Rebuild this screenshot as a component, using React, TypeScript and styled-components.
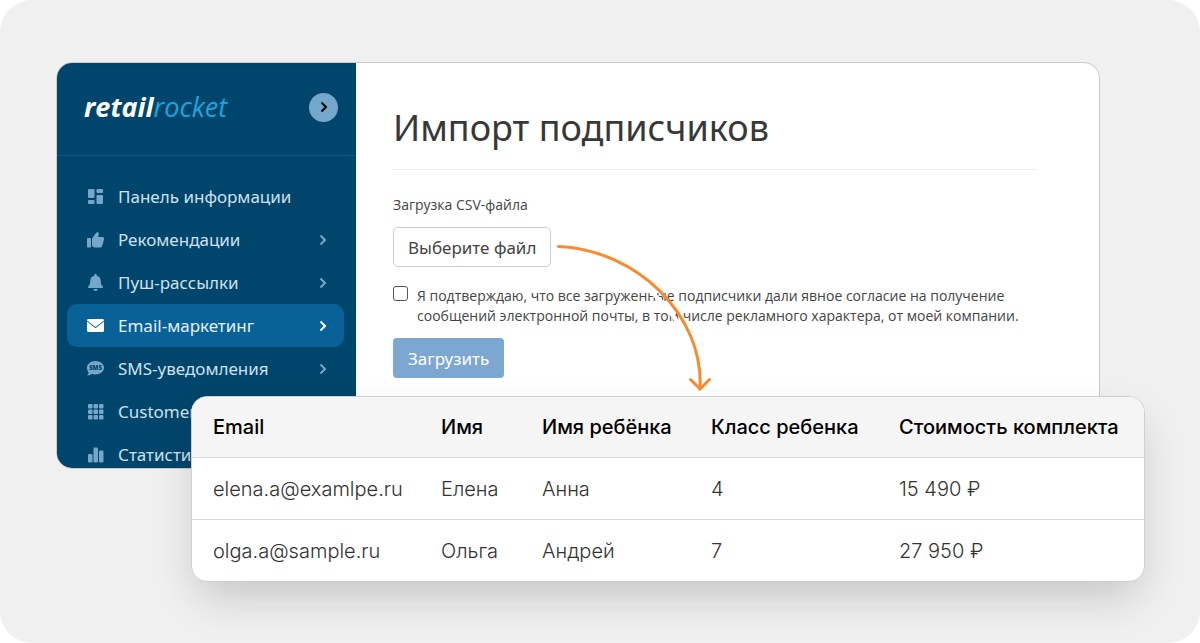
import { ReactNode } from "react"
import styled, { createGlobalStyle, css } from "styled-components"

const GlobalStyle = createGlobalStyle`
  * {
    box-sizing: border-box;
  }

  body {
    margin: 0;
    background: #ffffff;
    font-family: "Noto Sans", "Open Sans", sans-serif;
  }
`

const Stage = styled.div`
  min-height: 100vh;
  padding: 62px 55px 61px 56px;
  background: #f0f0f0;
  border-radius: 32px;
`

const Window = styled.div`
  display: flex;
  margin-right: 45px;
  overflow: hidden;
  background: #ffffff;
  border: 1px solid #cccccc;
  border-radius: 16px;
`

const Sidebar = styled.aside`
  flex: 0 0 299px;
  background: #00456b;
`

const SidebarHeader = styled.div`
  display: flex;
  align-items: center;
  justify-content: space-between;
  height: 93px;
  padding: 0 18px 4px 27px;
  border-bottom: 1px solid #075b8f;
`

const Logo = styled.a`
  color: #ffffff;
  font-family: "Open Sans", sans-serif;
  font-size: 27px;
  font-style: italic;
  font-weight: 700;
  line-height: 32px;
  text-decoration: none;

  span {
    color: #1ba5de;
    font-weight: 400;
  }
`

const CollapseButton = styled.button`
  display: flex;
  align-items: center;
  justify-content: center;
  width: 29px;
  height: 29px;
  padding: 0;
  color: #000000;
  background: #74a7cb;
  border: 0;
  border-radius: 50%;
`

/* the last item runs past the bottom edge of the window */
const Nav = styled.nav`
  display: flex;
  flex-direction: column;
  margin-bottom: -8px;
  padding: 19px 12px 0 10px;
`

const NavItem = styled.a<{ $active?: boolean }>`
  display: flex;
  align-items: center;
  gap: 13px;
  height: 43px;
  padding: 0 16px 0 19px;
  color: #cfe0ec;
  border-radius: 10px;
  font-size: 17px;
  line-height: 24px;
  text-decoration: none;
  white-space: nowrap;

  svg {
    flex: none;
    color: #74a7cb;
  }

  ${({ $active }) =>
    $active &&
    css`
      color: #e4f0f8;
      background: #086297;

      svg {
        color: #ffffff;
      }
    `}
`

const NavLabel = styled.span`
  flex: 1;
`

const Main = styled.main`
  flex: 1;
  padding: 41px 62px 0 37px;
  color: #444444;
`

const Title = styled.h1`
  margin: 0;
  padding-bottom: 17px;
  color: #383838;
  border-bottom: 1px solid #eeeeee;
  font-size: 36px;
  font-weight: 400;
  line-height: 48px;
`

const FieldLabel = styled.p`
  margin: 25px 0 12px;
  font-family: "Open Sans", sans-serif;
  font-size: 14px;
  line-height: 20px;
`

const FileField = styled.div`
  position: relative;
  width: fit-content;
`

const FileButton = styled.button`
  display: block;
  height: 40px;
  padding: 0 14px;
  color: #444444;
  background: #ffffff;
  border: 1px solid #cccccc;
  border-radius: 5px;
  font-family: inherit;
  font-size: 17px;
`

const Arrow = styled.svg`
  position: absolute;
  top: 0;
  left: 100%;
  pointer-events: none;
`

const Consent = styled.label`
  display: flex;
  align-items: flex-start;
  gap: 9px;
  margin: 19px 0 12px;
  font-family: "Open Sans", sans-serif;
  font-size: 14px;
  line-height: 20px;
`

const Checkbox = styled.input`
  flex: none;
  appearance: none;
  width: 15px;
  height: 15px;
  margin: 0;
  background: #ffffff;
  border: 1px solid #555555;
  border-radius: 3px;
`

const SubmitButton = styled.button`
  height: 40px;
  padding: 0 15px;
  color: #ffffff;
  background: #7ba7d1;
  border: 0;
  border-radius: 4px;
  font-family: inherit;
  font-size: 17px;
`

const TableCard = styled.div`
  position: relative;
  margin: -73px 0 0 135px;
  overflow: hidden;
  background: #ffffff;
  border: 1px solid #d0d0d0;
  border-radius: 16px;
  box-shadow: 0 20px 44px -8px rgba(30, 30, 30, 0.22);
`

const Table = styled.table`
  width: 100%;
  border-collapse: separate;
  border-spacing: 0;
  font-family: Inter, sans-serif;
  font-size: 20px;
  line-height: 24px;
  text-align: left;
  white-space: nowrap;

  th,
  td {
    padding: 18px 0 18px 21px;
  }

  th {
    color: #000000;
    background: #f5f5f5;
    font-weight: 500;
  }

  td {
    padding-top: 19px;
    color: #333333;
    border-top: 1px solid #d9d9d9;
    font-weight: 300;
  }
`

const Column = styled.col<{ $width?: number }>`
  width: ${({ $width }) => ($width ? `${$width}px` : "auto")};
`

const Icon = ({ children }: { children: ReactNode }) => (
  <svg width="19" height="18" viewBox="0 0 19 18" fill="currentColor">
    {children}
  </svg>
)

const Chevron = () => (
  <svg width="10" height="12" viewBox="0 0 10 12" fill="none">
    <path d="M2.500 1.500 7 6l-4.500 4.500" stroke="currentColor" strokeWidth="2" />
  </svg>
)

const DashboardIcon = () => (
  <Icon>
    <rect x="2" y="1" width="6.500" height="9" rx="1.200" />
    <rect x="10.500" y="1" width="6.500" height="4" rx="1.200" />
    <rect x="2" y="12" width="6.500" height="4" rx="1.200" />
    <rect x="10.500" y="7" width="6.500" height="9" rx="1.200" />
  </Icon>
)

const ThumbIcon = () => (
  <Icon>
    <rect x="1" y="7" width="4" height="9.500" rx="0.800" />
    <path d="M6 7.600 10 2c.4-.7 1-1 1.700-.8.9.2 1.300 1 1.100 1.900L12.200 6h4.300c1.200 0 1.900.9 1.600 2l-1.800 6.700c-.3 1.100-1.100 1.800-2.300 1.800H9c-.8 0-1.500-.3-2-.7l-1-.8Z" />
  </Icon>
)

const BellIcon = () => (
  <Icon>
    <path d="M9.500 0c.8 0 1.300.5 1.300 1.300v.5c2.500.6 4 2.600 4 5.200 0 3 .7 4.300 2 5.500.6.600.2 1.500-.6 1.500H2.800c-.8 0-1.200-.9-.6-1.500 1.300-1.200 2-2.500 2-5.500 0-2.600 1.500-4.600 4-5.200v-.5C8.200.5 8.700 0 9.500 0Z" />
    <path d="M7.200 15h4.600c-.2 1.200-1.100 2-2.300 2s-2.100-.8-2.300-2Z" />
  </Icon>
)

const MailIcon = () => (
  <Icon>
    <path d="M2.500 2h14c.8 0 1.500.6 1.500 1.400L9.500 10 1 3.400C1 2.600 1.700 2 2.500 2Z" />
    <path d="M1 4.500v9c0 .8.700 1.500 1.500 1.500h14c.8 0 1.500-.7 1.500-1.500v-9l-8.500 6.700Z" />
  </Icon>
)

const SmsIcon = () => (
  <Icon>
    <path d="M9.500 1C14.200 1 18 3.900 18 7.700s-3.800 6.700-8.500 6.700c-1.300 0-2.500-.2-3.600-.6C4.700 14.700 3 15.500 1 15.500c1-1 1.600-2 1.700-3C1.600 11.300 1 9.500 1 7.700 1 3.900 4.800 1 9.500 1Z" />
    <text
      x="9.500"
      y="9.800"
      fill="#00456b"
      fontFamily="Open Sans, sans-serif"
      fontSize="6"
      fontWeight="800"
      textAnchor="middle"
    >
      SMS
    </text>
  </Icon>
)

const GridIcon = () => (
  <Icon>
    {[1, 6.5, 12].map((y) =>
      [2, 7.5, 13].map((x) => (
        <rect key={`${x}-${y}`} x={x} y={y} width="4.500" height="4.500" rx="1" />
      ))
    )}
  </Icon>
)

const ChartIcon = () => (
  <Icon>
    <rect x="2" y="8" width="4.500" height="8.500" rx="1.200" />
    <rect x="7.500" y="1.500" width="4.500" height="15" rx="1.200" />
    <rect x="13" y="4.500" width="4.500" height="12" rx="1.200" />
  </Icon>
)

const navItems = [
  { label: "Панель информации", icon: <DashboardIcon /> },
  { label: "Рекомендации", icon: <ThumbIcon />, nested: true },
  { label: "Пуш-рассылки", icon: <BellIcon />, nested: true },
  { label: "Email-маркетинг", icon: <MailIcon />, nested: true, active: true },
  { label: "SMS-уведомления", icon: <SmsIcon />, nested: true },
  { label: "Customer", icon: <GridIcon /> },
  { label: "Статистика", icon: <ChartIcon /> },
]

const columns = [
  { title: "Email", width: 228 },
  { title: "Имя", width: 101 },
  { title: "Имя ребёнка", width: 169 },
  { title: "Класс ребенка", width: 188 },
  { title: "Стоимость комплекта" },
]

const rows = [
  ["elena.a@examlpe.ru", "Елена", "Анна", "4", "15 490 ₽"],
  ["olga.a@sample.ru", "Ольга", "Андрей", "7", "27 950 ₽"],
]

const AppSidebar = () => (
  <Sidebar>
    <SidebarHeader>
      <Logo href="#">
        retail<span>rocket</span>
      </Logo>
      <CollapseButton type="button" aria-label="Меню">
        <Chevron />
      </CollapseButton>
    </SidebarHeader>
    <Nav>
      {navItems.map(({ label, icon, nested, active }) => (
        <NavItem key={label} href="#" $active={active}>
          {icon}
          <NavLabel>{label}</NavLabel>
          {nested && <Chevron />}
        </NavItem>
      ))}
    </Nav>
  </Sidebar>
)

const ImportForm = () => (
  <Main>
    <Title>Импорт подписчиков</Title>
    <form onSubmit={(e) => e.preventDefault()}>
      <FieldLabel id="csv-label">Загрузка CSV-файла</FieldLabel>
      <FileField>
        <FileButton type="button" aria-describedby="csv-label">
          Выберите файл
        </FileButton>
        <Arrow width="170" height="170" viewBox="0 0 170 170" fill="none">
          <path
            d="M80 50C115 72 142 108 143 145"
            stroke="#ffffff"
            strokeWidth="4"
          />
          <g stroke="#fb8a2e" strokeWidth="3" strokeLinecap="round">
            <path d="M7.500 19.500C86 23 153 88 149 162" />
            <path d="m139.500 152.500 9.500 9.500 9.500-9.500" />
          </g>
        </Arrow>
      </FileField>
      <Consent>
        <Checkbox type="checkbox" />
        <span>
          Я подтверждаю, что все загруженные подписчики дали явное согласие на
          получение сообщений электронной почты, в том числе рекламного
          характера, от моей компании.
        </span>
      </Consent>
      <SubmitButton type="submit">Загрузить</SubmitButton>
    </form>
  </Main>
)

const SubscribersTable = () => (
  <TableCard>
    <Table>
      <colgroup>
        {columns.map(({ title, width }) => (
          <Column key={title} $width={width} />
        ))}
      </colgroup>
      <thead>
        <tr>
          {columns.map(({ title }) => (
            <th key={title} scope="col">
              {title}
            </th>
          ))}
        </tr>
      </thead>
      <tbody>
        {rows.map((row) => (
          <tr key={row[0]}>
            {row.map((cell) => (
              <td key={cell}>{cell}</td>
            ))}
          </tr>
        ))}
      </tbody>
    </Table>
  </TableCard>
)

export default function App() {
  return (
    <>
      <GlobalStyle />
      <Stage>
        <Window>
          <AppSidebar />
          <ImportForm />
        </Window>
        <SubscribersTable />
      </Stage>
    </>
  )
}
